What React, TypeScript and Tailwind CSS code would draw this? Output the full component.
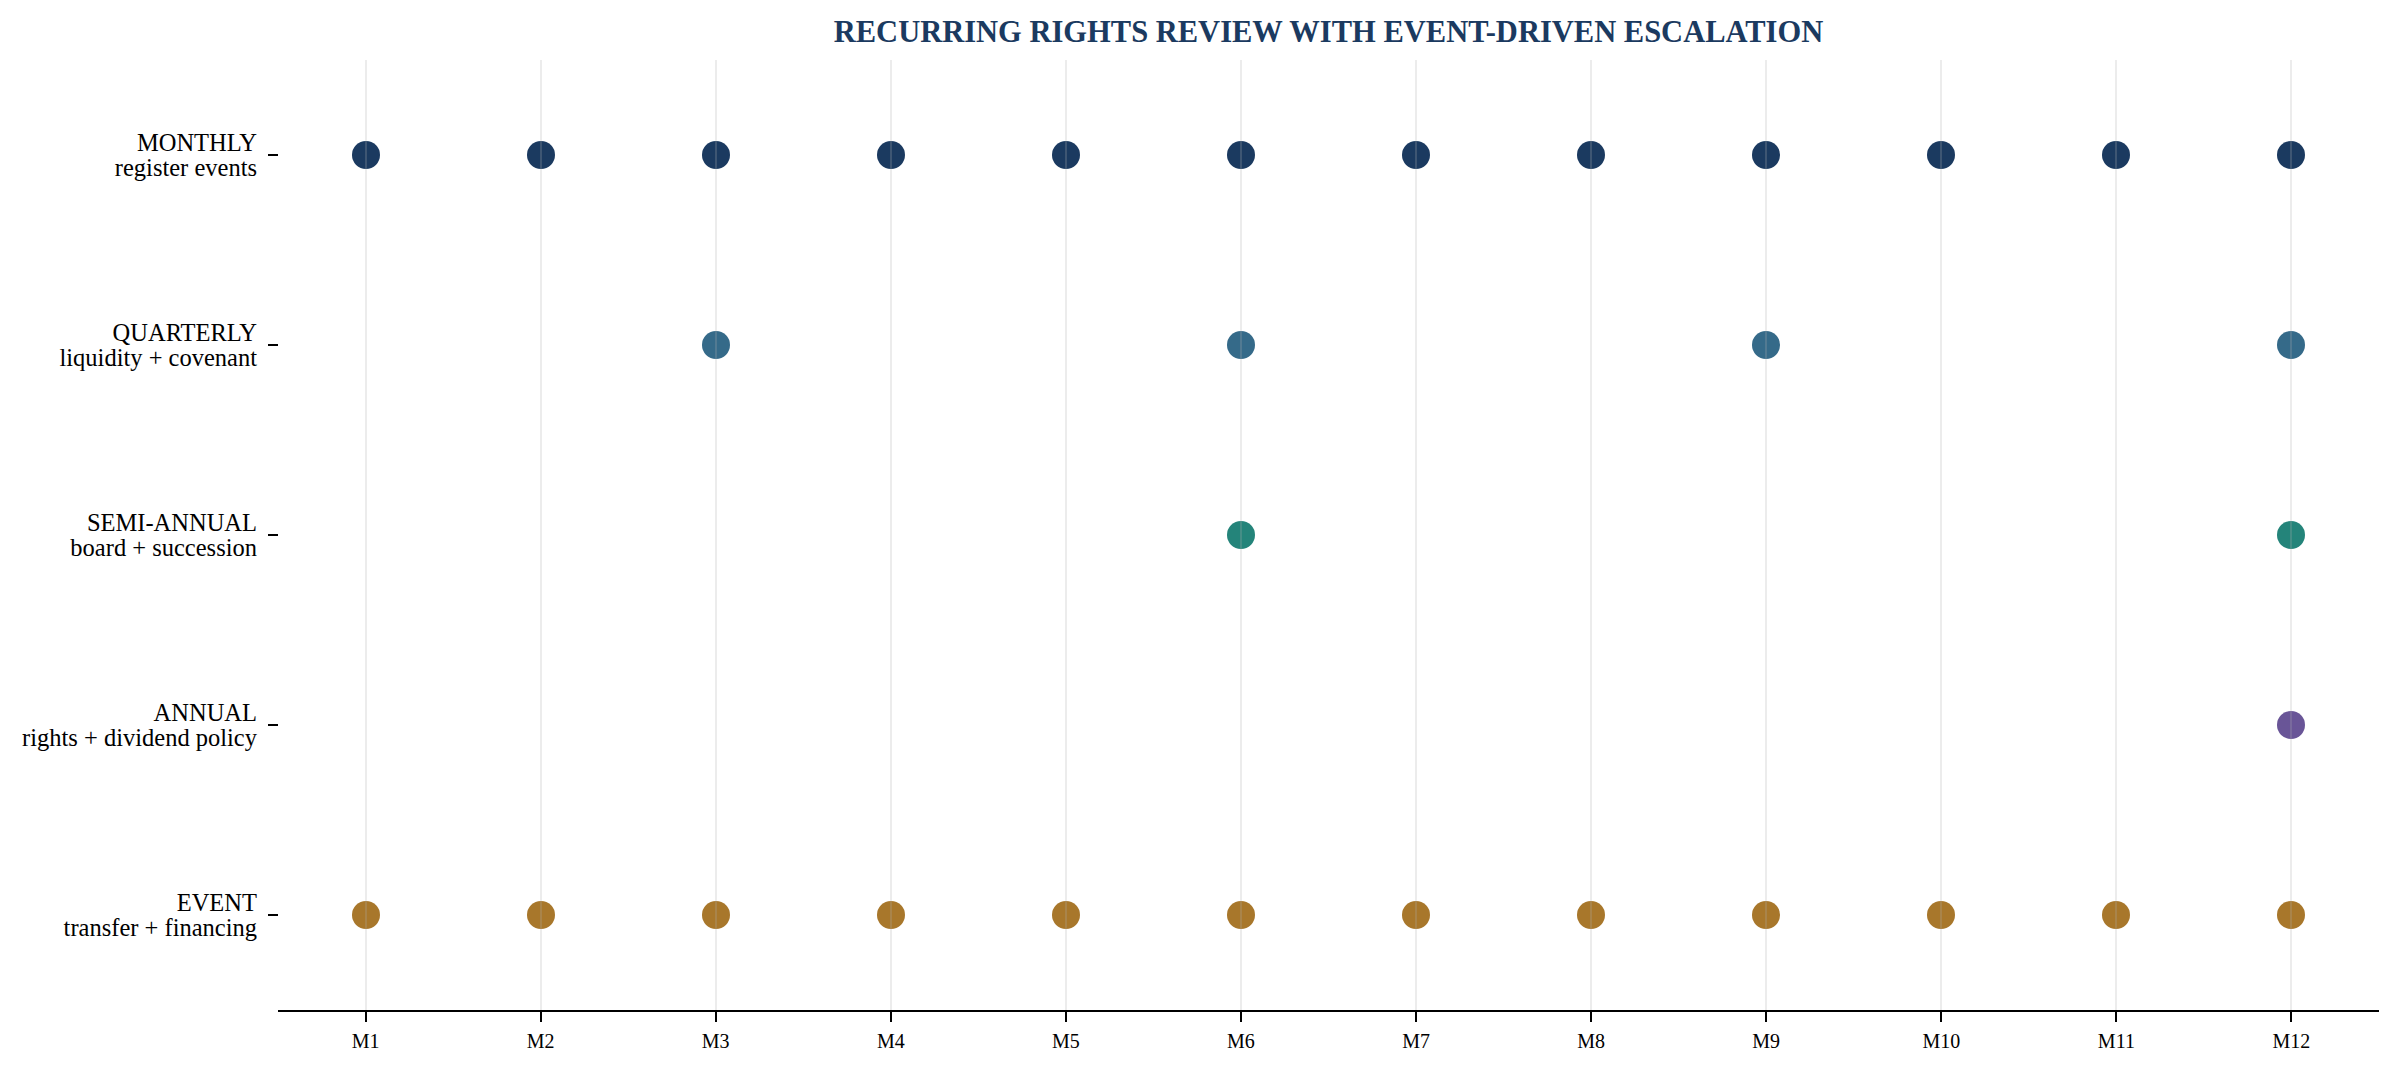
const months = ["M1", "M2", "M3", "M4", "M5", "M6", "M7", "M8", "M9", "M10", "M11", "M12"]

type Row = {
  key: string
  title: string
  sub: string
  dot: string
  months: number[]
}

const rows: Row[] = [
  { key: "monthly", title: "MONTHLY", sub: "register events", dot: "bg-[#1b3a60]", months: [1, 2, 3, 4, 5, 6, 7, 8, 9, 10, 11, 12] },
  { key: "quarterly", title: "QUARTERLY", sub: "liquidity + covenant", dot: "bg-[#356a89]", months: [3, 6, 9, 12] },
  { key: "semi", title: "SEMI-ANNUAL", sub: "board + succession", dot: "bg-[#24847a]", months: [6, 12] },
  { key: "annual", title: "ANNUAL", sub: "rights + dividend policy", dot: "bg-[#695597]", months: [12] },
  { key: "event", title: "EVENT", sub: "transfer + financing", dot: "bg-[#a8772b]", months: [1, 2, 3, 4, 5, 6, 7, 8, 9, 10, 11, 12] },
]

export default function App() {
  return (
    <div className="w-[2401px] h-[1074px] bg-white flex font-['Liberation_Serif','Times_New_Roman',serif] text-black">
      {/* Y axis labels + ticks */}
      <div className="w-[278px] flex flex-col pt-[60px]">
        {rows.map((row) => (
          <div key={row.key} className="h-[190px] flex items-center justify-end">
            <div className="text-right text-[24.5px] leading-[25px]">
              <div>{row.title}</div>
              <div>{row.sub}</div>
            </div>
            <div className="ml-[11px] w-[10px] h-[2px] bg-black" />
          </div>
        ))}
      </div>

      {/* Plot */}
      <div className="w-[2101px] flex flex-col">
        <div className="h-[60px] pt-[17px] text-center text-[30.5px] leading-[30px] font-bold text-[#1b3a60]">
          RECURRING RIGHTS REVIEW WITH EVENT-DRIVEN ESCALATION
        </div>

        <div className="h-[950px] grid grid-cols-12">
          {months.map((m, i) => (
            <div key={m} className="relative flex flex-col">
              {rows.map((row) => (
                <div key={row.key} className="h-[190px] flex items-center justify-center">
                  {row.months.includes(i + 1) && (
                    <div className={`w-[28px] h-[28px] rounded-full ${row.dot}`} />
                  )}
                </div>
              ))}
              {/* gridline sits over the markers */}
              <div className="absolute top-0 bottom-0 left-1/2 -translate-x-1/2 w-[2px] bg-[rgba(176,176,176,0.24)]" />
            </div>
          ))}
        </div>

        {/* X axis */}
        <div className="border-t-2 border-black grid grid-cols-12">
          {months.map((m) => (
            <div key={m} className="flex flex-col items-center">
              <div className="w-[2px] h-[10px] bg-black" />
              <div className="mt-[8px] text-[20px] leading-[23px]">{m}</div>
            </div>
          ))}
        </div>
      </div>
    </div>
  )
}
